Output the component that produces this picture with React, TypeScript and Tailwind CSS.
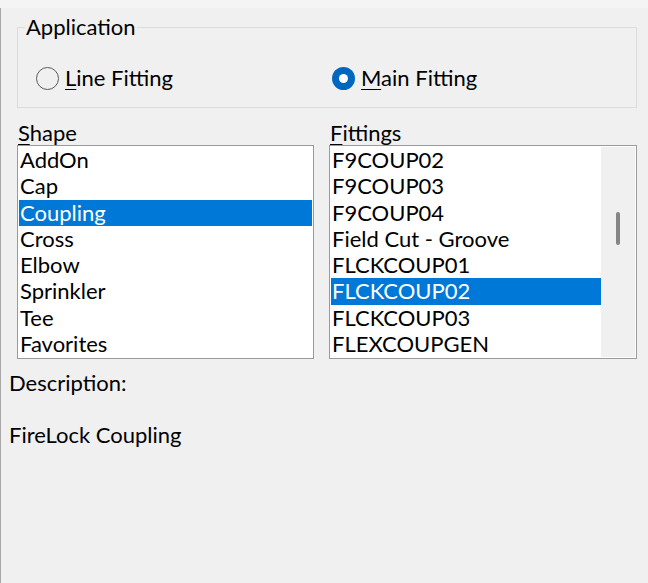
import React from "react";

const shapes = ["AddOn", "Cap", "Coupling", "Cross", "Elbow", "Sprinkler", "Tee", "Favorites"];
const fittings = [
  "F9COUP02",
  "F9COUP03",
  "F9COUP04",
  "Field Cut - Groove",
  "FLCKCOUP01",
  "FLCKCOUP02",
  "FLCKCOUP03",
  "FLEXCOUPGEN",
];

function Row({ text, selected }: { text: string; selected?: boolean }) {
  return (
    <div
      className={
        "h-[26.3px] leading-[26.3px] pl-[1px] whitespace-nowrap " +
        (selected ? "bg-[#0078d7] text-white" : "text-black")
      }
    >
      {text}
    </div>
  );
}

export default function App() {
  return (
    <div className="w-[648px] h-[583px] bg-[#f0f0f0] text-[22px] text-black font-['Lato','Segoe_UI',sans-serif] overflow-hidden">
      <div className="h-[8px] bg-[#f4f4f4]" />
      <div className="h-[575px] border-l border-[#a8a8a8] flex flex-col">
        <fieldset className="ml-[16px] mt-[7px] w-[620px] h-[93px] border border-[#dcdcdc] p-0">
          <legend className="ml-[7px] px-[1px] leading-[24px]">Application</legend>
          <div className="flex items-center pt-[27px] pl-[18px] h-[24px] box-content">
            <label className="flex items-center w-[296px]">
              <span className="w-[23px] h-[23px] rounded-full border-[1.5px] border-[#5a5a5a] bg-transparent" />
              <span className="ml-[6px] leading-[24px]">
                <span className="underline underline-offset-[3px] decoration-1">L</span>ine Fitting
              </span>
            </label>
            <label className="flex items-center">
              <span className="w-[23px] h-[23px] rounded-full bg-[#0067c0] flex items-center justify-center">
                <span className="w-[9px] h-[9px] rounded-full bg-white" />
              </span>
              <span className="ml-[6px] leading-[24px]">
                <span className="underline underline-offset-[3px] decoration-1">M</span>ain Fitting
              </span>
            </label>
          </div>
        </fieldset>

        <div className="flex mt-[13px] ml-[16px] gap-[15px]">
          <div className="flex flex-col w-[297px]">
            <div className="leading-[24px] pl-[1px]">
              <span className="underline underline-offset-[3px] decoration-1">S</span>hape
            </div>
            <div className="h-[214px] bg-white border border-[#9a9a9a] p-[1px]">
              {shapes.map((s) => (
                <Row key={s} text={s} selected={s === "Coupling"} />
              ))}
            </div>
          </div>
          <div className="flex flex-col w-[308px]">
            <div className="leading-[24px] pl-[1px]">
              <span className="underline underline-offset-[3px] decoration-1">F</span>ittings
            </div>
            <div className="h-[214px] bg-white border border-[#9a9a9a] p-[1px] flex">
              <div className="flex-1">
                {fittings.map((s) => (
                  <Row key={s} text={s} selected={s === "FLCKCOUP02"} />
                ))}
              </div>
              <div className="w-[34px] bg-[#f0f0f0] flex justify-center pt-[65px]">
                <div className="w-[4px] h-[33px] rounded-full bg-[#858585]" />
              </div>
            </div>
          </div>
        </div>

        <div className="ml-[8px] mt-[12px] leading-[24px]">Description:</div>
        <div className="ml-[8px] mt-[28px] leading-[24px]">FireLock Coupling</div>
      </div>
    </div>
  );
}
